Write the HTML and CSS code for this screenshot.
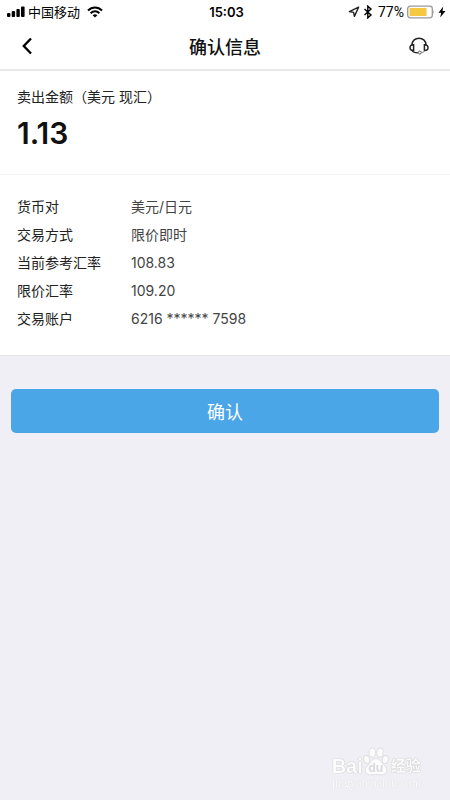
FILE: index.html
```html
<!DOCTYPE html>
<html lang="zh-CN">
<head>
  <meta charset="UTF-8" />
  <meta name="viewport" content="width=device-width, initial-scale=1.0"/>
  <title>确认信息</title>
  <link rel="stylesheet" href="styles.css">
</head>
<body>
  <!-- Status bar -->
  <div class="status-bar">
    <div class="status-left">
      <svg width="18" height="12" viewBox="0 0 18 12">
        <rect x="0" y="7" width="3.4" height="4" rx="1"/>
        <rect x="4.7" y="5" width="3.4" height="6" rx="1"/>
        <rect x="9.4" y="3" width="3.4" height="8" rx="1"/>
        <rect x="14" y="0.5" width="3.6" height="10.5" rx="1"/>
      </svg>
      <span class="carrier">中国移动</span>
      <svg width="16" height="12" viewBox="0 0 16 12" fill="none" stroke="#000" stroke-width="2">
        <path d="M1 4.5C5 0.4 11 0.4 15 4.5"/>
        <path d="M3.6 7.3C6.2 4.7 9.8 4.7 12.4 7.3"/>
        <path d="M5.6 9.2Q8 7.2 10.4 9.2L8 11.6Z" fill="#000" stroke="none"/>
      </svg>
    </div>
    <div class="time">15:03</div>
    <div class="status-right">
      <svg width="12" height="12" viewBox="0 0 12 12" fill="none" stroke="#222" stroke-width="1.4" stroke-linejoin="round">
        <path d="M10.6 1.2L1.4 5.6L5.6 6.4L6.4 10.4Z"/>
      </svg>
      <svg width="10" height="14" viewBox="0 0 10 14" fill="none" stroke="#000" stroke-width="1.4">
        <path d="M1.5 4L8 10L4.8 12.8V1.2L8 4L1.5 10"/>
      </svg>
      <span class="percent">77%</span>
      <svg width="28" height="14" viewBox="0 0 28 14">
        <rect x="0.7" y="1.2" width="24.6" height="11.6" rx="2.5" fill="#fff" stroke="#999" stroke-width="1.3"/>
        <rect x="2.5" y="3" width="17" height="8" fill="#f5c842"/>
        <path d="M26.3 5Q28 7 26.3 9Z" fill="#999"/>
      </svg>
      <svg width="8" height="12" viewBox="0 0 8 12">
        <path d="M5.2 0.5L0.5 6.8H3.2L2.2 11.5L7.5 4.9H4.5Z"/>
      </svg>
    </div>
  </div>

  <!-- Title bar -->
  <header class="nav">
    <button class="nav-btn" aria-label="返回">
      <svg width="10" height="18" viewBox="0 0 10 18" fill="none" stroke="#000" stroke-width="2.4">
        <path d="M9 1.5L1.8 9L9 16.5"/>
      </svg>
    </button>
    <h1>确认信息</h1>
    <button class="nav-btn" aria-label="客服">
      <svg width="20" height="18" viewBox="0 0 20 18" fill="none" stroke="#222" stroke-width="1.5">
        <path d="M3 8C3 -1 17 -1 17 8"/>
        <path d="M4.6 7.8C2.4 7.6 1 8.6 1 10.7S2.4 13.7 4.6 13.5Z"/>
        <path d="M15.4 7.8C17.6 7.6 19 8.6 19 10.7S17.6 13.7 15.4 13.5Z"/>
        <path d="M3 13.5C4 15.3 5.8 15.8 9 15.8" stroke-width="1.3"/>
        <circle cx="10.8" cy="15.6" r="1.5" stroke="#555" stroke-width="1"/>
        <path d="M12.3 15.6C14 15.5 15.2 14.8 16 13.6" stroke="#777" stroke-width="1"/>
      </svg>
    </button>
  </header>

  <main>
    <section class="amount">
      <p class="amount-label">卖出金额（美元 现汇）</p>
      <p class="amount-value">1.13</p>
    </section>

    <dl class="details">
      <dt>货币对</dt><dd>美元/日元</dd>
      <dt>交易方式</dt><dd>限价即时</dd>
      <dt>当前参考汇率</dt><dd>108.83</dd>
      <dt>限价汇率</dt><dd>109.20</dd>
      <dt>交易账户</dt><dd>6216 ****** 7598</dd>
    </dl>

    <div class="actions">
      <button class="confirm">确认</button>
    </div>
  </main>

  <!-- Watermark -->
  <div class="watermark">
    <div class="brand">
      <span class="brand-bai">Bai</span>
      <span class="paw">
        <svg width="26" height="29" viewBox="0 0 26 29" fill="#fcfcfd" stroke="#dedee3" stroke-width="1">
          <ellipse cx="3.7" cy="12.5" rx="3" ry="4" transform="rotate(-12 3.7 12.5)"/>
          <ellipse cx="9.3" cy="5.5" rx="3.2" ry="4.6"/>
          <ellipse cx="17" cy="5.5" rx="3.2" ry="4.6" transform="rotate(8 17 5.5)"/>
          <ellipse cx="22.3" cy="12.5" rx="3" ry="4" transform="rotate(12 22.3 12.5)"/>
          <path d="M13 11.5C8.5 11.5 8 15.5 5 18C1.8 20.5 1.5 24 3 26C5.4 29 8.7 27.5 13 27.5S20.6 29 23 26C24.5 24 24.2 20.5 21 18C18 15.5 17.5 11.5 13 11.5Z"/>
        </svg>
        <span class="paw-text">du</span>
      </span>
      <span class="brand-cn">经验</span>
    </div>
    <div class="site">jingyan.baidu.com</div>
  </div>
</body>
</html>
```
FILE: styles.css
```css
* {
  margin: 0;
  padding: 0;
  box-sizing: border-box;
}

body {
  min-height: 100vh;
  background: #efeff5;
  color: #222;
  font-family: Inter, "Noto Sans CJK SC", sans-serif;
  font-size: 14px;
}

svg {
  display: block;
}

button {
  border: none;
  background: none;
  font-family: inherit;
  cursor: pointer;
}

.status-bar {
  display: grid;
  grid-template-columns: 1fr auto 1fr;
  align-items: center;
  height: 23px;
  padding: 0 4px 0 7px;
  background: #fff;
  color: #000;
  font-size: 13px;
}

.status-left,
.status-right {
  display: flex;
  align-items: center;
  gap: 3px;
}

.carrier {
  margin-right: 4px;
}

.time {
  font-weight: 600;
}

.status-right {
  justify-content: flex-end;
}

.percent {
  margin-left: 2px;
  font-family: Roboto, sans-serif;
  font-size: 14px;
}

.nav {
  display: flex;
  align-items: center;
  justify-content: space-between;
  height: 48px;
  padding: 0 16px;
  background: #fff;
  border-bottom: 2px solid #e8e8e8;
}

.nav h1 {
  color: #111;
  font-size: 18px;
  font-weight: 500;
}

.nav-btn {
  display: flex;
  align-items: center;
  justify-content: center;
  width: 30px;
  height: 40px;
}

.nav-btn:first-child {
  width: 22px;
  margin-right: 8px;
}

.amount {
  height: 104px;
  padding: 16px 17px;
  background: #fff;
  border-bottom: 1px solid #f3f3f3;
}

.amount-label {
  line-height: 20px;
}

.amount-value {
  margin-top: 6px;
  color: #111;
  font-size: 30px;
  font-weight: 600;
  line-height: 40px;
}

.details {
  display: grid;
  grid-template-columns: 114px 1fr;
  padding: 18px 17px 22px;
  background: #fff;
  border-bottom: 1px solid #e3e3e9;
  line-height: 28px;
}

.details dd {
  color: #444;
}

.actions {
  padding: 33px 11px;
}

.confirm {
  display: block;
  width: 100%;
  height: 44px;
  border-radius: 5px;
  background: #4ba6e8;
  color: #fff;
  font-size: 18px;
}

/* floats over the page corner */
.watermark {
  position: fixed;
  right: 29px;
  bottom: 10px;
  color: #fcfcfd;
  text-shadow: 0 0 1px #bbb, 0 0 1px #bbb;
}

.brand {
  display: flex;
  align-items: flex-end;
  height: 30px;
}

.brand-bai {
  font-family: "Liberation Sans", sans-serif;
  font-size: 20px;
  font-weight: 700;
  line-height: 20px;
}

.paw {
  display: grid;
  place-items: end center;
  margin-right: 2px;
}

.paw svg,
.paw-text {
  grid-area: 1 / 1;
}

.paw-text {
  color: #d9d9df;
  font-size: 12px;
  font-weight: 700;
  line-height: 16px;
  text-shadow: none;
}

.brand-cn {
  font-size: 15px;
  font-weight: 700;
  line-height: 20px;
}

.site {
  font-family: "Liberation Serif", serif;
  font-size: 12px;
  line-height: 14px;
  text-shadow: 0 0 1px #ccc;
}
```
